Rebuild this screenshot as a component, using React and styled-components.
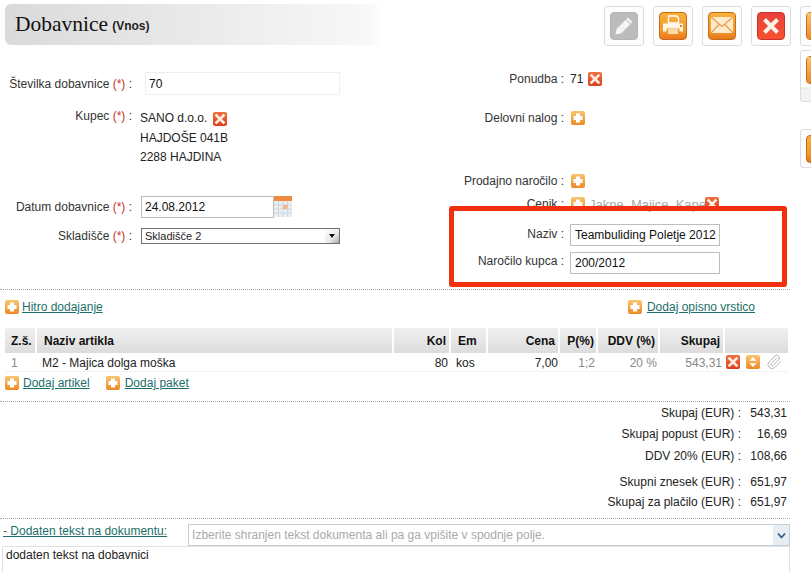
import styled, { createGlobalStyle } from 'styled-components';
import { Paperclip } from 'lucide-react';

/* global */
const GlobalStyle = createGlobalStyle`
    html, body {
        margin: 0;
        padding: 0;
        background: #fff;
    }
    body {
        font-family: "Liberation Sans", Arial, sans-serif;
        font-size: 12px;
        color: #222;
    }
`;

const Page = styled.div`
    position: relative;
    width: 811px;
    height: 573px;
    overflow: hidden;
    background: #fff;
`;

/* header */
const TopBar = styled.div`
    display: flex;
    padding: 4px 0 0 5px;
    height: 41px;
`;
const TitleBar = styled.div`
    width: 378px;
    height: 41px;
    flex-shrink: 0;
    box-sizing: border-box;
    padding-left: 10px;
    display: flex;
    align-items: center;
    gap: 4px;
    border-radius: 6px 0 0 6px;
    background: linear-gradient(90deg, #dadada 0%, #e8e8e8 45%, #f8f8f8 96%, #fff 100%);
`;
const Title = styled.h1`
    margin: 0;
    font-family: "Liberation Serif", Georgia, serif;
    font-size: 21.5px;
    font-weight: normal;
    color: #111;
`;
const TitleNote = styled.span`
    font-size: 12px;
    font-weight: bold;
    color: #222;
    margin-top: 3px;
`;
const Toolbar = styled.div`
    display: flex;
    gap: 9px;
    margin: 2px 0 0 221px;
    flex-shrink: 0;
`;
const ToolButton = styled.div`
    width: 40px;
    height: 40px;
    flex-shrink: 0;
    box-sizing: border-box;
    border: 1px solid #ddd;
    border-radius: 3px;
    background: #fdfdfd;
    display: flex;
    align-items: center;
    justify-content: center;
`;
const ToolFace = styled.div`
    width: 28px;
    height: 28px;
    border-radius: 4px;
    display: flex;
    align-items: center;
    justify-content: center;
    background: ${p => p.$tone === 'grey' ? '#bcbcbc'
        : p.$tone === 'red' ? 'linear-gradient(180deg, #e8413c, #f8502e)'
        : 'linear-gradient(180deg, #f9b03c 0%, #f09a2c 70%, #e8761a 100%)'};
    border: 1px solid ${p => p.$tone === 'grey' ? '#b4b4b4' : p.$tone === 'red' ? '#c9302c' : '#c96a14'};
    box-sizing: border-box;
`;

/* floating tools cut by the right edge */
const SideTool = styled.div`
    position: absolute;
    left: 800px;
    top: ${p => p.$top}px;
    width: 40px;
    height: ${p => p.$height}px;
    box-sizing: border-box;
    border: 1px solid #ddd;
    border-radius: 3px;
    background: ${p => p.$strip ? 'linear-gradient(180deg, #fff 0, #fff 36px, #dfe8d8 37px, #f3f3f3 38px)' : '#fdfdfd'};
    padding: 5px 0 0 5px;
`;

/* form */
const FormColumns = styled.div`
    display: flex;
    height: 244px;
`;
const LeftColumn = styled.div`
    width: 449px;
    flex-shrink: 0;
`;
const RightColumn = styled.div`
    position: relative;
    flex: 1;
`;
const FieldRow = styled.div`
    display: flex;
    align-items: ${p => p.$top ? 'flex-start' : 'center'};
    margin-top: ${p => p.$gap || 0}px;
    min-height: 16px;
`;
const LeftLabel = styled.div`
    width: 132px;
    flex-shrink: 0;
    text-align: right;
    color: #333;
    white-space: nowrap;
    margin-top: ${p => p.$drop || 0}px;
    margin-bottom: ${p => p.$lift || 0}px;
`;
const RightLabel = styled(LeftLabel)`
    width: 115px;
`;
const Required = styled.span`
    color: #c8312c;
`;
const FieldValue = styled.div`
    margin-left: ${p => p.$gap || 8}px;
    display: flex;
    align-items: center;
    gap: ${p => p.$inner || 5}px;
    color: #222;
    white-space: nowrap;
`;
const AddressLines = styled.div`
    line-height: 19.5px;
    margin-top: 2px;
`;
const TextInput = styled.input`
    box-sizing: border-box;
    width: ${p => p.$width}px;
    height: ${p => p.$height || 23}px;
    padding: 0 0 0 ${p => p.$pad || 3}px;
    border: 1px solid ${p => p.$soft ? '#efefef' : '#bdbdbd'};
    border-radius: 0;
    outline: none;
    background: #fff;
    font-family: inherit;
    font-size: 12px;
    color: #111;
`;
const DateField = styled.div`
    display: flex;
    align-items: flex-start;
`;
const FakeSelect = styled.div`
    box-sizing: border-box;
    width: 199px;
    height: 16px;
    border: 1px solid #6f6f6f;
    padding-left: 3px;
    font-size: 11px;
    line-height: 14px;
    color: #222;
    display: flex;
    justify-content: space-between;
    background: #fff;
`;
const SelectArrow = styled.div`
    width: 14px;
    background: linear-gradient(135deg, #fff, #e9e9e9 60%, #a9a9a9);
    display: flex;
    align-items: center;
    justify-content: center;
    &::after {
        content: "";
        border-left: 3px solid transparent;
        border-right: 3px solid transparent;
        border-top: 4px solid #111;
    }
`;
const MutedText = styled.span`
    color: #a9a9a9;
    font-size: 13px;
    margin-right: -6px;
    margin-left: -1px;
`;
const Annotation = styled.div`
    position: absolute;
    left: 0;
    top: 161px;
    width: 338px;
    height: 81px;
    box-sizing: border-box;
    border: 5px solid #f0300f;
    border-radius: 3px;
    pointer-events: none;
`;

/* dividers and links */
const DottedRule = styled.div`
    width: ${p => p.$width || 790}px;
    border-top: 1px dotted #aaa;
`;
const LinkRow = styled.div`
    display: flex;
    justify-content: space-between;
    height: 38px;
    box-sizing: border-box;
    padding: 10px 56px 0 5px;
`;
const LinkGroup = styled.div`
    display: flex;
    align-items: center;
    gap: ${p => p.$gap || 5}px;
    height: 14px;
`;
const TextLink = styled.a`
    color: #1b6f68;
    text-decoration: underline;
    white-space: nowrap;
    margin-right: ${p => p.$after || 0}px;
    margin-bottom: ${p => p.$lift || 0}px;
`;

/* table */
const ColumnGrid = styled.div`
    display: grid;
    grid-template-columns: 30px 355px 55px 35px 70px 36px 60px 63px 63px;
    column-gap: 2px;
    margin-left: 5px;
    width: 783px;
`;
const HeadCell = styled.div`
    height: 25px;
    box-sizing: border-box;
    padding: 0 ${p => p.$end || 3}px 0 ${p => p.$pad || 0}px;
    display: flex;
    align-items: center;
    justify-content: ${p => p.$left ? 'flex-start' : 'flex-end'};
    font-weight: bold;
    color: #111;
    background: linear-gradient(180deg, #f0f0f0, #dcdcdc);
`;
const BodyRow = styled(ColumnGrid)`
    height: 18px;
    border-bottom: 1px solid #f3f3f3;
    align-items: center;
`;
const BodyCell = styled.div`
    box-sizing: border-box;
    padding: 1px ${p => p.$right || 0}px 0 ${p => p.$pad || 0}px;
    text-align: ${p => p.$left ? 'left' : 'right'};
    color: ${p => p.$muted ? '#888' : '#222'};
    white-space: nowrap;
`;
const RowActions = styled.div`
    display: flex;
    align-items: center;
    gap: 6px;
    margin-left: 1px;
`;
const TableLinks = styled.div`
    display: flex;
    padding: 4px 0 0 5px;
    height: 29px;
    box-sizing: border-box;
`;

/* totals */
const Totals = styled.div`
    padding: 2px 24px 7px 0;
`;
const TotalRow = styled.div`
    display: flex;
    justify-content: flex-end;
    line-height: 18px;
    margin-top: ${p => p.$gap || 0}px;
`;
const TotalValue = styled.div`
    width: 46px;
    text-align: right;
`;

/* document text */
const NoteHead = styled.div`
    display: flex;
    align-items: center;
    height: 27px;
    padding: 5px 0 0 3px;
    box-sizing: border-box;
`;
const NoteSelect = styled.div`
    box-sizing: border-box;
    width: 602px;
    height: 22px;
    margin-left: 21px;
    border: 1px solid #c4d0d8;
    padding-left: 3px;
    color: #aaa;
    display: flex;
    align-items: center;
    justify-content: space-between;
`;
const NoteArrow = styled.div`
    width: 16px;
    height: 100%;
    background: #e6edf3;
    display: flex;
    align-items: center;
    justify-content: center;
`;
const NoteArea = styled.textarea`
    display: block;
    box-sizing: border-box;
    width: 788px;
    height: 60px;
    margin: 0 0 0 2px;
    padding: 1px 3px;
    border: 1px solid #e2e2e2;
    outline: none;
    resize: none;
    font-family: inherit;
    font-size: 12px;
    color: #222;
`;

/* small icon tile */
const Tile = styled.span`
    display: inline-flex;
    flex-shrink: 0;
    width: ${p => p.$size || 14}px;
    height: ${p => p.$size || 14}px;
    border-radius: 2px;
    background: ${p => p.$red
        ? 'linear-gradient(180deg, #ee7040, #dc3f1f)'
        : 'linear-gradient(180deg, #f9c66e, #ec8a24)'};
`;

function PlusIcon({ size }) {
    return (
        <Tile $size={size}>
            <svg viewBox="0 0 14 14" width="100%" height="100%">
                <path d="M5 2.500h4v2.500h2.500v4H9v2.500H5V9H2.500V5H5z" fill="#fff" />
            </svg>
        </Tile>
    );
}

function CrossIcon() {
    return (
        <Tile $red>
            <svg viewBox="0 0 14 14" width="14" height="14">
                <path d="M3.500 3.500l7 7M10.500 3.500l-7 7" stroke="#fdeee2" strokeWidth="2.600" strokeLinecap="square" />
            </svg>
        </Tile>
    );
}

function SortIcon() {
    return (
        <Tile>
            <svg viewBox="0 0 14 14" width="14" height="14">
                <path d="M7 2l3.500 3.700h-7zM7 12l-3.500-3.700h7z" fill="#fff" />
            </svg>
        </Tile>
    );
}

function CalendarIcon() {
    return (
        <svg width="18" height="21" viewBox="0 0 18 21">
            <rect width="18" height="5" fill="#f08a3c" />
            <rect y="5" width="18" height="16" fill="#e9eef2" />
            <path d="M0 9h18M0 13h18M0 17h18M4.500 5v16M9 5v16M13.500 5v16" stroke="#cfd8df" />
            <rect x="9" y="9" width="4.500" height="4" fill="#f3b48a" />
        </svg>
    );
}

function PencilIcon() {
    return (
        <svg width="22" height="22" viewBox="0 0 22 22">
            <path d="M15 2.500l4.500 4.500L8 18.500l-5.500 1 1-5.500z" fill="#f4f4f4" />
            <path d="M13 4.500l4.500 4.500" stroke="#bcbcbc" />
        </svg>
    );
}

function PrinterIcon() {
    return (
        <svg width="24" height="24" viewBox="0 0 24 24">
            <path d="M7.500 2h8l2 2v5h-10z" fill="none" stroke="#fff" strokeWidth="1.400" />
            <path d="M2 9.500h20v8h-3.500v-3h-13v3H2z" fill="#fff" fillOpacity=".9" />
            <rect x="7" y="15" width="10" height="5" fill="#fbd9a8" />
            <rect x="19" y="11" width="2" height="2" fill="#ee7d12" />
        </svg>
    );
}

function MailIcon() {
    return (
        <svg width="24" height="24" viewBox="0 0 24 24">
            <rect x="1" y="3" width="22" height="16" fill="#fdeccd" />
            <path d="M1 3l11 9.500L23 3M1 19l8-8.500M23 19l-8-8.500" fill="none" stroke="#ef9a4a" strokeWidth="1.200" />
        </svg>
    );
}

function LargeCross() {
    return (
        <svg width="22" height="22" viewBox="0 0 22 22">
            <path d="M4.500 4.500l13 13M17.500 4.500l-13 13" stroke="#fdf1ea" strokeWidth="4" />
        </svg>
    );
}

function Chevron() {
    return (
        <svg width="9" height="7" viewBox="0 0 9 7">
            <path d="M1 1.500l3.500 4 3.500-4" fill="none" stroke="#2d5f8a" strokeWidth="1.800" />
        </svg>
    );
}

const lines = [
    { label: 'Skupaj (EUR) :', value: '543,31', gap: 0 },
    { label: 'Skupaj popust (EUR) :', value: '16,69', gap: 3 },
    { label: 'DDV 20% (EUR) :', value: '108,66', gap: 4 },
    { label: 'Skupni znesek (EUR) :', value: '651,97', gap: 8 },
    { label: 'Skupaj za plačilo (EUR) :', value: '651,97', gap: 2 },
];

function App() {
    return (
        <Page>
            <GlobalStyle />
            <TopBar>
                <TitleBar>
                    <Title>Dobavnice</Title>
                    <TitleNote>(Vnos)</TitleNote>
                </TitleBar>
                <Toolbar>
                    <ToolButton><ToolFace $tone="grey"><PencilIcon /></ToolFace></ToolButton>
                    <ToolButton><ToolFace><PrinterIcon /></ToolFace></ToolButton>
                    <ToolButton><ToolFace><MailIcon /></ToolFace></ToolButton>
                    <ToolButton><ToolFace $tone="red"><LargeCross /></ToolFace></ToolButton>
                    <ToolButton><ToolFace><PlusIcon size={26} /></ToolFace></ToolButton>
                </Toolbar>
            </TopBar>
            <SideTool $strip $top={50} $height={52}><ToolFace><PlusIcon size={26} /></ToolFace></SideTool>
            <SideTool $top={129} $height={39}><ToolFace /></SideTool>

            <FormColumns>
                <LeftColumn>
                    <FieldRow $gap={27}>
                        <LeftLabel>Številka dobavnice <Required>(*)</Required> :</LeftLabel>
                        <FieldValue $gap={13}><TextInput $soft $width={195} readOnly value="70" /></FieldValue>
                    </FieldRow>
                    <FieldRow $top $gap={12}>
                        <LeftLabel $drop={2}>Kupec <Required>(*)</Required> :</LeftLabel>
                        <AddressLines>
                            <FieldValue $inner={6}>SANO d.o.o. <CrossIcon /></FieldValue>
                            <FieldValue>HAJDOŠE 041B</FieldValue>
                            <FieldValue>2288 HAJDINA</FieldValue>
                        </AddressLines>
                    </FieldRow>
                    <FieldRow $gap={28}>
                        <LeftLabel>Datum dobavnice <Required>(*)</Required> :</LeftLabel>
                        <FieldValue $gap={9}>
                            <DateField>
                                <TextInput $width={133} $height={22} readOnly value="24.08.2012" />
                                <CalendarIcon />
                            </DateField>
                        </FieldValue>
                    </FieldRow>
                    <FieldRow $gap={10}>
                        <LeftLabel>Skladišče <Required>(*)</Required> :</LeftLabel>
                        <FieldValue $gap={9}>
                            <FakeSelect>Skladišče 2<SelectArrow /></FakeSelect>
                        </FieldValue>
                    </FieldRow>
                </LeftColumn>

                <RightColumn>
                    <FieldRow $gap={26}>
                        <RightLabel>Ponudba :</RightLabel>
                        <FieldValue $gap={6}>71 <CrossIcon /></FieldValue>
                    </FieldRow>
                    <FieldRow $gap={23}>
                        <RightLabel>Delovni nalog :</RightLabel>
                        <FieldValue $gap={7}><PlusIcon /></FieldValue>
                    </FieldRow>
                    <FieldRow $gap={47}>
                        <RightLabel>Prodajno naročilo :</RightLabel>
                        <FieldValue $gap={7}><PlusIcon /></FieldValue>
                    </FieldRow>
                    <FieldRow $gap={7}>
                        <RightLabel>Cenik :</RightLabel>
                        <FieldValue $gap={7}>
                            <PlusIcon />
                            <MutedText>Jakne, Majice, Kape</MutedText>
                            <CrossIcon />
                        </FieldValue>
                    </FieldRow>
                    <FieldRow $gap={12}>
                        <RightLabel $lift={2}>Naziv :</RightLabel>
                        <FieldValue $gap={6}>
                            <TextInput $width={150} $height={22} $pad={4} readOnly value="Teambuliding Poletje 2012" />
                        </FieldValue>
                    </FieldRow>
                    <FieldRow $gap={6}>
                        <RightLabel $lift={4}>Naročilo kupca :</RightLabel>
                        <FieldValue $gap={6}>
                            <TextInput $width={150} $height={22} $pad={4} readOnly value="200/2012" />
                        </FieldValue>
                    </FieldRow>
                    <Annotation />
                </RightColumn>
            </FormColumns>

            <DottedRule />
            <LinkRow>
                <LinkGroup $gap={3}><PlusIcon /><TextLink>Hitro dodajanje</TextLink></LinkGroup>
                <LinkGroup><PlusIcon /><TextLink>Dodaj opisno vrstico</TextLink></LinkGroup>
            </LinkRow>

            <ColumnGrid>
                <HeadCell $left $pad={6}>Z.š.</HeadCell>
                <HeadCell $left $pad={7}>Naziv artikla</HeadCell>
                <HeadCell>Kol</HeadCell>
                <HeadCell $left $pad={7}>Em</HeadCell>
                <HeadCell>Cena</HeadCell>
                <HeadCell $end={2}>P(%)</HeadCell>
                <HeadCell>DDV (%)</HeadCell>
                <HeadCell>Skupaj</HeadCell>
                <HeadCell />
            </ColumnGrid>
            <BodyRow>
                <BodyCell $left $muted $pad={6}>1</BodyCell>
                <BodyCell $left $pad={5}>M2 - Majica dolga moška</BodyCell>
                <BodyCell $right={1}>80</BodyCell>
                <BodyCell $left $pad={5}>kos</BodyCell>
                <BodyCell>7,00</BodyCell>
                <BodyCell $muted $right={1}>1;2</BodyCell>
                <BodyCell $muted $right={1}>20 %</BodyCell>
                <BodyCell $muted $right={1}>543,31</BodyCell>
                <RowActions>
                    <CrossIcon />
                    <SortIcon />
                    <Paperclip size={16} color="#b5b5b5" strokeWidth={1.5} />
                </RowActions>
            </BodyRow>
            <TableLinks>
                <LinkGroup $gap={4}><PlusIcon /><TextLink $after={16}>Dodaj artikel</TextLink></LinkGroup>
                <LinkGroup><PlusIcon /><TextLink>Dodaj paket</TextLink></LinkGroup>
            </TableLinks>

            <DottedRule />
            <Totals>
                {lines.map(line => (
                    <TotalRow key={line.label} $gap={line.gap}>
                        {line.label}
                        <TotalValue>{line.value}</TotalValue>
                    </TotalRow>
                ))}
            </Totals>

            <DottedRule />
            <NoteHead>
                <TextLink $lift={8}>- Dodaten tekst na dokumentu:</TextLink>
                <NoteSelect>
                    Izberite shranjen tekst dokumenta ali pa ga vpišite v spodnje polje.
                    <NoteArrow><Chevron /></NoteArrow>
                </NoteSelect>
            </NoteHead>
            <NoteArea readOnly value="dodaten tekst na dobavnici" />
        </Page>
    );
}

export default App;
